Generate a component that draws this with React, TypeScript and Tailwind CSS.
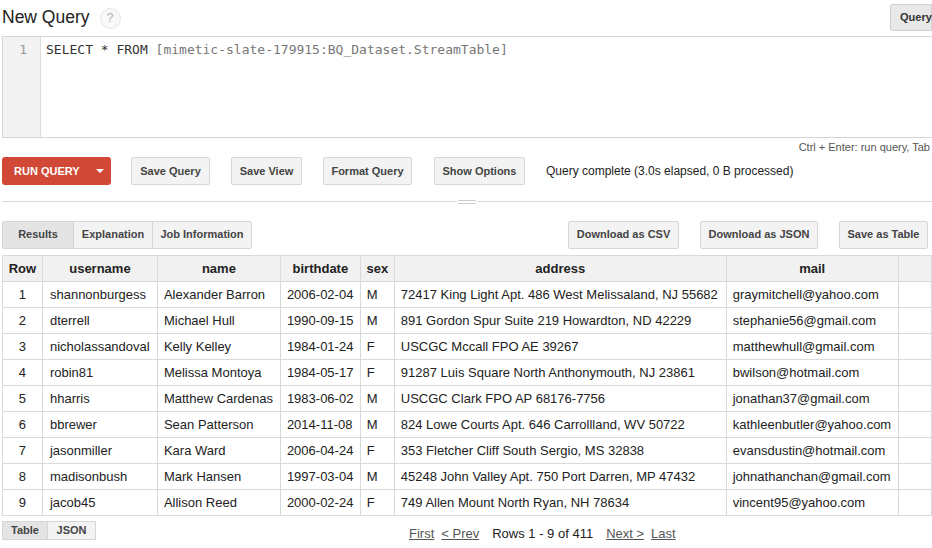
import type { FC, ReactNode } from 'react';

interface Person {
  username: string;
  name: string;
  birthdate: string;
  sex: string;
  address: string;
  mail: string;
}

const rows: Person[] = [
  { username: 'shannonburgess', name: 'Alexander Barron', birthdate: '2006-02-04', sex: 'M', address: '72417 King Light Apt. 486 West Melissaland, NJ 55682', mail: 'graymitchell@yahoo.com' },
  { username: 'dterrell', name: 'Michael Hull', birthdate: '1990-09-15', sex: 'M', address: '891 Gordon Spur Suite 219 Howardton, ND 42229', mail: 'stephanie56@gmail.com' },
  { username: 'nicholassandoval', name: 'Kelly Kelley', birthdate: '1984-01-24', sex: 'F', address: 'USCGC Mccall FPO AE 39267', mail: 'matthewhull@gmail.com' },
  { username: 'robin81', name: 'Melissa Montoya', birthdate: '1984-05-17', sex: 'F', address: '91287 Luis Square North Anthonymouth, NJ 23861', mail: 'bwilson@hotmail.com' },
  { username: 'hharris', name: 'Matthew Cardenas', birthdate: '1983-06-02', sex: 'M', address: 'USCGC Clark FPO AP 68176-7756', mail: 'jonathan37@gmail.com' },
  { username: 'bbrewer', name: 'Sean Patterson', birthdate: '2014-11-08', sex: 'M', address: '824 Lowe Courts Apt. 646 Carrollland, WV 50722', mail: 'kathleenbutler@yahoo.com' },
  { username: 'jasonmiller', name: 'Kara Ward', birthdate: '2006-04-24', sex: 'F', address: '353 Fletcher Cliff South Sergio, MS 32838', mail: 'evansdustin@hotmail.com' },
  { username: 'madisonbush', name: 'Mark Hansen', birthdate: '1997-03-04', sex: 'M', address: '45248 John Valley Apt. 750 Port Darren, MP 47432', mail: 'johnathanchan@gmail.com' },
  { username: 'jacob45', name: 'Allison Reed', birthdate: '2000-02-24', sex: 'F', address: '749 Allen Mount North Ryan, NH 78634', mail: 'vincent95@yahoo.com' },
];

const Btn: FC<{ children: ReactNode; className?: string }> = ({ children, className = '' }) => (
  <button
    className={`h-[28px] rounded-[2px] border border-[#d6d6d6] bg-[#f3f3f3] text-[11px] font-bold text-[#444] ${className}`}
  >
    {children}
  </button>
);

const App: FC = () => (
  <div className="w-[932px] h-[548px] overflow-hidden bg-white font-['Liberation_Sans',Arial,sans-serif] text-[#222]">
    {/* title */}
    <div className="flex items-center h-[36px] pl-[2px]">
      <h1 className="text-[17.5px] leading-none">New Query</h1>
      <span className="ml-[10px] w-[21px] h-[21px] rounded-full border border-[#e6e6e6] bg-[#f8f8f8] text-[#b0b0b0] text-[12px] flex items-center justify-center">
        ?
      </span>
      <div className="ml-auto self-start mt-[4px] h-[27px] w-[42px] rounded-l-[2px] border border-[#d0d0d0] bg-[#e8e8e8] text-[11px] font-bold text-[#333] flex items-center pl-[9px]">
        Query
      </div>
    </div>

    {/* editor */}
    <div className="ml-[2px] h-[102px] flex border-y border-l border-[#d4d4d4]">
      <div className="w-[38px] bg-[#f3f3f3] border-r border-[#ddd] text-right pr-[13px] pt-[3px] font-['DejaVu_Sans_Mono',monospace] text-[13px] text-[#999]">
        1
      </div>
      <div className="pl-[5px] pt-[3px] font-['DejaVu_Sans_Mono',monospace] text-[13px] text-[#333]">
        SELECT * FROM <span className="text-[#777]">[mimetic-slate-179915:BQ_Dataset.StreamTable]</span>
      </div>
    </div>
    <div className="h-[19px] text-right pr-[2px] text-[11px] text-[#555] leading-[19px]">
      Ctrl + Enter: run query, Tab
    </div>

    {/* actions */}
    <div className="flex items-center h-[28px] pl-[2px]">
      <button className="h-[28px] w-[109px] rounded-[3px] bg-[#d14836] text-white text-[11px] font-bold flex items-center pl-[12px]">
        RUN QUERY
        <span className="ml-[16px] w-0 h-0 border-x-[4px] border-x-transparent border-t-[4px] border-t-white" />
      </button>
      <Btn className="ml-[20px] w-[79px]">Save Query</Btn>
      <Btn className="ml-[21px] w-[71px]">Save View</Btn>
      <Btn className="ml-[21px] w-[89px]">Format Query</Btn>
      <Btn className="ml-[22px] w-[91px]">Show Options</Btn>
      <span className="ml-[21px] text-[12px] text-[#222]">Query complete (3.0s elapsed, 0 B processed)</span>
    </div>

    {/* divider */}
    <div className="mt-[14px] ml-[2px] h-[5px] flex items-center">
      <div className="flex-1 border-t border-[#d8d8d8]" />
      <div className="w-[18px] flex flex-col gap-[2px] mx-[1px]">
        <div className="border-t border-[#ccc]" />
        <div className="border-t border-[#ccc]" />
      </div>
      <div className="flex-1 border-t border-[#d8d8d8]" />
    </div>

    {/* tabs + downloads */}
    <div className="flex items-center mt-[16px] pl-[2px] h-[29px]">
      <div className="flex h-[28px] border border-[#d6d6d6] rounded-[2px] text-[11px] font-bold text-[#444]">
        <div className="w-[70px] bg-[#e4e4e4] flex items-center justify-center">Results</div>
        <div className="w-[79px] bg-[#f3f3f3] border-l border-[#d6d6d6] flex items-center justify-center">Explanation</div>
        <div className="w-[99px] bg-[#f3f3f3] border-l border-[#d6d6d6] flex items-center justify-center">Job Information</div>
      </div>
      <Btn className="ml-auto w-[111px]">Download as CSV</Btn>
      <Btn className="ml-[21px] w-[118px]">Download as JSON</Btn>
      <Btn className="ml-[21px] mr-[4px] w-[89px]">Save as Table</Btn>
    </div>

    {/* results table */}
    <table className="mt-[6px] ml-[2px] border-collapse table-fixed text-[13px] text-[#222]">
      <colgroup>
        <col className="w-[40px]" />
        <col className="w-[115px]" />
        <col className="w-[123px]" />
        <col className="w-[80px]" />
        <col className="w-[34px]" />
        <col className="w-[332px]" />
        <col className="w-[172px]" />
        <col className="w-[34px]" />
      </colgroup>
      <thead>
        <tr className="h-[26px] bg-[#f1f1f1]">
          {['Row', 'username', 'name', 'birthdate', 'sex', 'address', 'mail', ''].map((h, i) => (
            <th key={i} className="border border-[#d9d9d9] font-bold px-[5px] text-center whitespace-nowrap">
              {h}
            </th>
          ))}
        </tr>
      </thead>
      <tbody>
        {rows.map((r, i) => (
          <tr key={r.username} className="h-[26px]">
            <td className="border border-[#d9d9d9] text-center">{i + 1}</td>
            <td className="border border-[#d9d9d9] px-[7px] whitespace-nowrap">{r.username}</td>
            <td className="border border-[#d9d9d9] px-[6px] whitespace-nowrap">{r.name}</td>
            <td className="border border-[#d9d9d9] px-[6px] whitespace-nowrap">{r.birthdate}</td>
            <td className="border border-[#d9d9d9] px-[6px]">{r.sex}</td>
            <td className="border border-[#d9d9d9] px-[6px] whitespace-nowrap">{r.address}</td>
            <td className="border border-[#d9d9d9] px-[6px] whitespace-nowrap">{r.mail}</td>
            <td className="border border-[#d9d9d9]" />
          </tr>
        ))}
      </tbody>
    </table>

    {/* footer */}
    <div className="flex items-start mt-[5px] pl-[2px]">
      <div className="flex h-[19px] border border-[#d6d6d6] text-[11px] font-bold text-[#444]">
        <div className="w-[44px] bg-[#e4e4e4] flex items-center justify-center">Table</div>
        <div className="w-[48px] bg-[#f3f3f3] border-l border-[#d6d6d6] flex items-center justify-center">JSON</div>
      </div>
      <div className="ml-[313px] mt-[3px] flex gap-[7px] text-[13px] text-[#444]">
        <a className="underline text-[#555]">First</a>
        <a className="underline text-[#555]">&lt; Prev</a>
        <span className="mx-[6px] text-[#222]">Rows 1 - 9 of 411</span>
        <a className="underline text-[#555]">Next &gt;</a>
        <a className="underline text-[#555]">Last</a>
      </div>
    </div>
  </div>
);

export default App;
